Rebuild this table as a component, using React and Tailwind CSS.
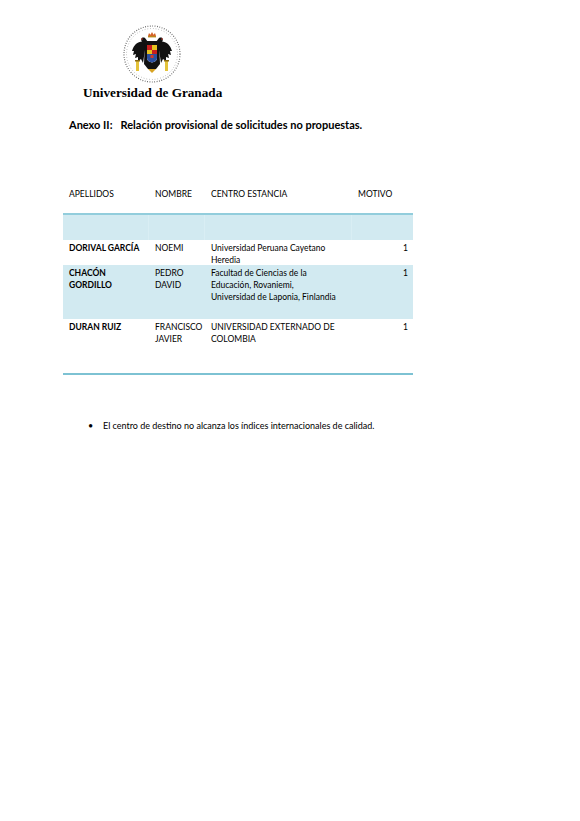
import React from "react";

const ROWS = [
  { apellidos: ["DORIVAL GARCÍA"], nombre: ["NOEMI"], centro: ["Universidad Peruana Cayetano", "Heredia"], motivo: "1", shaded: false, h: "h-[25px]" },
  { apellidos: ["CHACÓN", "GORDILLO"], nombre: ["PEDRO", "DAVID"], centro: ["Facultad de Ciencias de la", "Educación, Rovaniemi,", "Universidad de Laponia, Finlandia"], motivo: "1", shaded: true, h: "h-[54px]" },
  { apellidos: ["DURAN RUIZ"], nombre: ["FRANCISCO", "JAVIER"], centro: ["UNIVERSIDAD EXTERNADO DE", "COLOMBIA"], motivo: "1", shaded: false, h: "h-[54px]" },
];

function Logo() {
  return (
    <svg width="60" height="60" viewBox="0 0 60 60">
      <circle cx="30" cy="30" r="28" fill="none" stroke="#555" strokeWidth="1.2" strokeDasharray="0.8 1.6" />
      <circle cx="30" cy="30" r="25.5" fill="none" stroke="#999" strokeWidth="1" strokeDasharray="0.6 2.2" />
      {/* crown */}
      <path d="M26 12 L27 9 L28.5 10.8 L30 8 L31.5 10.8 L33 9 L34 12 Z" fill="#d4642a" />
      <rect x="26" y="12" width="8" height="1.4" fill="#b8861b" />
      {/* heads */}
      <path d="M20 18 C18 15 20 12.5 23 14 L26 18 Z" fill="#111" />
      <path d="M40 18 C42 15 40 12.5 37 14 L34 18 Z" fill="#111" />
      <circle cx="20" cy="15" r="0.8" fill="#d13a2a" />
      <circle cx="40" cy="15" r="0.8" fill="#d13a2a" />
      {/* wings */}
      <path d="M24 18 C17 16 12 20 10 27 L12 27 L11 31 L14 30 L13 34 L16 33 L16 37 L19 35 L21 39 L23 26 Z" fill="#111" />
      <path d="M36 18 C43 16 48 20 50 27 L48 27 L49 31 L46 30 L47 34 L44 33 L44 37 L41 35 L39 39 L37 26 Z" fill="#111" />
      <path d="M23 17 L37 17 L38 40 L34 45 L26 45 L22 40 Z" fill="#111" />
      {/* shield */}
      <path d="M25 21 L35 21 L35 34 C35 37 32 38 30 38.5 C28 38 25 37 25 34 Z" fill="#fff" />
      <rect x="25" y="21" width="5" height="5" fill="#c8201e" />
      <rect x="30" y="21" width="5" height="5" fill="#e7c21f" />
      <rect x="25" y="26" width="5" height="4" fill="#e7c21f" />
      <rect x="30" y="26" width="5" height="4" fill="#c8201e" />
      <path d="M25 30 L35 30 L35 34 C35 37 32 38 30 38.5 C28 38 25 37 25 34 Z" fill="#2a4fa0" />
      <rect x="28.5" y="31" width="3" height="3" fill="#d13a2a" />
      {/* pillars */}
      <rect x="14" y="37" width="3" height="10" fill="#e4c33a" />
      <rect x="43" y="37" width="3" height="10" fill="#e4c33a" />
      <rect x="13" y="36" width="5" height="1.5" fill="#8a6a10" />
      <rect x="42" y="36" width="5" height="1.5" fill="#8a6a10" />
      <path d="M26 45 L30 49 L34 45 Z" fill="#d8a323" />
    </svg>
  );
}

function Cell({ lines, className = "", bold = false }) {
  return (
    <div className={`px-[6px] leading-[12px] ${bold ? "font-bold" : ""} ${className}`}>
      {lines.map((l, i) => (
        <div key={i} className="whitespace-nowrap">{l}</div>
      ))}
    </div>
  );
}

export default function App() {
  return (
    <div className="relative h-[821px] w-[580px] bg-white text-black" style={{ fontFamily: "Lato, 'Liberation Sans', sans-serif" }}>
      <div className="pl-[122px] pt-[24px]">
        <Logo />
      </div>
      <div className="mt-[1px] pl-[83px] text-[13.2px] font-bold leading-[16px]" style={{ fontFamily: "'Liberation Serif', serif" }}>
        Universidad de Granada
      </div>
      <div className="mt-[17px] pl-[69px] text-[11px] font-bold leading-[14px]">
        Anexo II:&nbsp;&nbsp; Relación provisional de solicitudes no propuestas.
      </div>

      <div className="ml-[63px] mt-[56px] w-[350px] text-[8.5px]">
        <div className="grid h-[27px] grid-cols-[86px_56px_147px_61px] border-b-2 border-[#92cddc]">
          <Cell lines={["APELLIDOS"]} />
          <Cell lines={["NOMBRE"]} />
          <Cell lines={["CENTRO ESTANCIA"]} />
          <Cell lines={["MOTIVO"]} />
        </div>
        <div className="grid h-[25px] grid-cols-[86px_56px_147px_61px] bg-[#d2eaf1]">
          <div className="border-r border-[#d9eef4]" />
          <div className="border-r border-[#d9eef4]" />
          <div className="border-r border-[#d9eef4]" />
          <div />
        </div>
        {ROWS.map((r, i) => (
          <div key={i} className={`grid grid-cols-[86px_56px_147px_61px] pt-[2px] ${r.h} ${r.shaded ? "bg-[#d2eaf1]" : ""}`}>
            <Cell lines={r.apellidos} bold />
            <Cell lines={r.nombre} />
            <Cell lines={r.centro} />
            <div className="pr-[5px] text-right leading-[12px]">{r.motivo}</div>
          </div>
        ))}
        <div className="h-[2px] bg-[#7dc2d3]" />
      </div>

      <div className="mt-[45px] flex items-center pl-[88px] text-[9px] leading-[12px]">
        <span className="w-[15px] text-[9px]">•</span>
        <span>El centro de destino no alcanza los índices internacionales de calidad.</span>
      </div>
    </div>
  );
}
